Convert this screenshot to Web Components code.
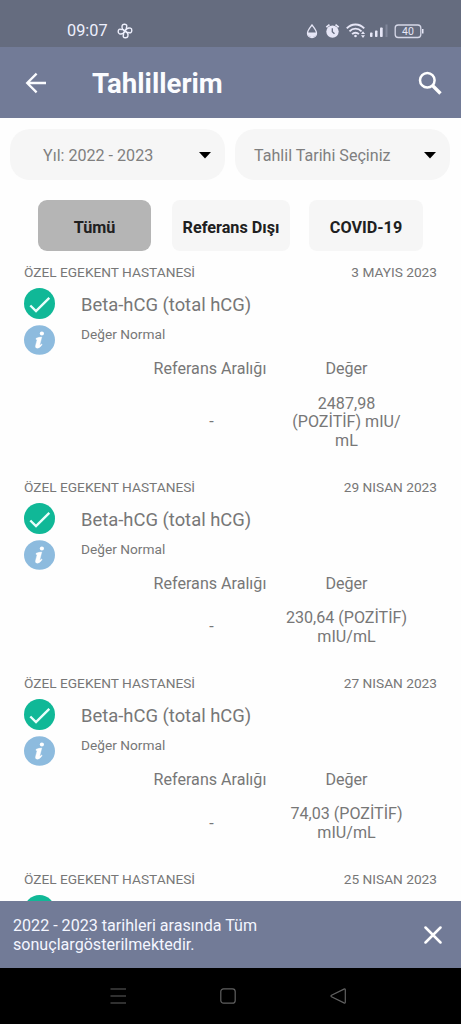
<!DOCTYPE html>
<html lang="tr">
<head>
<meta charset="utf-8">
<meta name="viewport" content="width=device-width">
<title>Tahlillerim</title>
<style>
html,body{margin:0;height:100%;overflow:hidden;background:#fefefe}
body{font-family:Roboto,"Noto Sans",sans-serif}
</style>
</head>
<body>
<lab-app></lab-app>
<script>
function define(name, css, html) {
  const t = document.createElement('template');
  t.innerHTML = `<style>*{box-sizing:border-box}${css}</style>${html}`;
  customElements.define(name, class extends HTMLElement {
    constructor() {
      super();
      this.attachShadow({mode: 'open'}).append(t.content.cloneNode(true));
    }
  });
}

define('status-bar', `
:host{display:flex;height:47px;flex:none;background:#656c7f;color:#eef0fd;padding:14px 37px 0 67px;align-items:center;justify-content:space-between}
.l{display:flex;align-items:center}
.t{font-size:16.300px;line-height:20px;padding-top:1px}
svg{display:block;flex:none}`, `
<div class="l"><span class="t">09:07</span>
<svg style="margin-left:9.500px" width="16" height="16" viewBox="0 0 16 16" fill="none" stroke="#eef0fd" stroke-width="1.400" stroke-linejoin="round">
<path d="M8 8C5.800 7 4.600 4.600 5.200 2.500C5.500 1.400 6.500 1.100 7.700 1.200C9.600 1.400 10.300 2.600 9.500 4.200C9.800 5.700 9.200 7 8 8Z"/>
<path d="M8 8C5.800 7 4.600 4.600 5.200 2.500C5.500 1.400 6.500 1.100 7.700 1.200C9.600 1.400 10.300 2.600 9.500 4.200C9.800 5.700 9.200 7 8 8Z" transform="rotate(90 8 8)"/>
<path d="M8 8C5.800 7 4.600 4.600 5.200 2.500C5.500 1.400 6.500 1.100 7.700 1.200C9.600 1.400 10.300 2.600 9.500 4.200C9.800 5.700 9.200 7 8 8Z" transform="rotate(180 8 8)"/>
<path d="M8 8C5.800 7 4.600 4.600 5.200 2.500C5.500 1.400 6.500 1.100 7.700 1.200C9.600 1.400 10.300 2.600 9.500 4.200C9.800 5.700 9.200 7 8 8Z" transform="rotate(270 8 8)"/></svg></div>
<svg width="120" height="18" viewBox="304 22 120 18" fill="#e6e6f6">
<path d="M312 25C310 27.800 307.500 30.300 307.500 33.200A4.500 4.300 0 0 0 316.500 33.200C316.500 30.300 314 27.800 312 25Z" fill="none" stroke="#e6e6f6" stroke-width="1.300"/>
<path d="M307.300 32.500H316.700A4.700 4.700 0 0 1 307.300 32.500Z"/>
<circle cx="332.500" cy="31.600" r="6.200"/>
<path d="M326.300 27.200L329.500 24.600M338.700 27.200L335.500 24.600" stroke="#e6e6f6" stroke-width="1.700" fill="none"/>
<path d="M332.300 28.300V31.700L334.500 33.800" fill="none" stroke="#656c7f" stroke-width="1.300"/>
<g fill="none" stroke="#e6e6f6" stroke-width="1.900"><path d="M346.800 28.400C351.500 23.100 359.500 23.100 364.200 28.400"/><path d="M349.500 31.400C352.900 27.700 358.100 27.700 361.500 31.400"/><path d="M352.100 34.100C354 32.200 357 32.200 358.900 34.100"/></g>
<circle cx="355.500" cy="36" r="1.300"/>
<path d="M361 34L363 31.300L365 34ZM361 35.200L363 37.900L365 35.200Z"/>
<rect x="370" y="32.500" width="2.500" height="4.500" rx=".8"/><rect x="375" y="30.500" width="2.500" height="6.500" rx=".8"/><rect x="380" y="27.500" width="2.700" height="9.500" rx=".8"/><rect x="385.500" y="24.500" width="2" height="12.500" fill="#80869a"/>
<rect x="395.200" y="25" width="25.600" height="12.500" rx="3" fill="none" stroke="#d6d8e8" stroke-width="1.300"/>
<path d="M422 29H423.500V33.500H422Z"/>
<text x="408" y="35" font-family="Roboto,sans-serif" font-size="10.500" text-anchor="middle">40</text></svg>`);

define('app-header', `
:host{display:flex;height:71px;flex:none;background:#727b97;color:#fbfcff;align-items:center;padding:0 19px 0 25px}
h1{margin:2px 0 0 45px;flex:1;font-size:27.600px;line-height:34px;font-weight:700}
svg{display:block}`, `
<svg width="22" height="22" viewBox="0 0 22 22" fill="none" stroke="#fbfcff" stroke-width="2.300"><path d="M21 11H2M11.600 1.600L2.200 11L11.600 20.400"/></svg>
<h1><slot></slot></h1>
<svg width="24" height="24" viewBox="0 0 24 24" fill="none" stroke="#fff"><circle cx="9.300" cy="9.300" r="7.300" stroke-width="2.500"/><path d="M14.500 14.500L22.500 22.500" stroke-width="3.300"/></svg>`);

define('select-pill', `
:host{display:flex;height:51px;border-radius:20px;background:#f6f6f6;color:#7f7f7f;align-items:center;justify-content:space-between;font-size:16.100px;line-height:20px}
span{padding-top:2px}
svg{display:block;margin-top:1px}`, `
<span><slot></slot></span><svg width="12" height="7" viewBox="0 0 12 7"><path d="M0 0H12L6 6.500Z" fill="#000"/></svg>`);

define('filter-tab', `
:host{display:flex;height:51px;border-radius:8px;background:#f6f6f6;color:#202020;align-items:center;justify-content:center;font-size:16.200px;font-weight:700;white-space:nowrap;padding-top:3px;box-sizing:border-box}
:host([active]){background:#b5b5b5;border-radius:9px}`, `<slot></slot>`);

define('lab-result', `
:host{display:block;color:#777;padding:0 24px 26.700px}
header{display:flex;justify-content:space-between;font-size:13.700px;line-height:20px;height:26px}
.m{display:grid;grid-template-columns:57px 1fr}
.i{display:grid;gap:6px;align-content:start}
svg{display:block}
.n{font-size:18.400px;line-height:22px;padding-top:6px}
.s{font-size:13.700px;line-height:18px;margin-top:9px}
.g{display:grid;grid-template-columns:136px 134px;margin:5px 0 0 118px;text-align:center;font-size:16.100px;line-height:18.500px;align-items:center;row-gap:16px}
.g>*{width:100%}
.v,.k{padding-left:3px}
:host([peek]) .g,:host([peek]) .n,:host([peek]) .s{display:none}`, `
<header><span>ÖZEL EGEKENT HASTANESİ</span><span><slot name="date"></slot></span></header>
<div class="m"><div class="i">
<svg width="31" height="31" viewBox="0 0 31 31"><circle cx="15.500" cy="15.500" r="15.500" fill="#10b897"/><path d="M6.300 17.500L12 23L25.300 9.800" fill="none" stroke="#e9fffb" stroke-width="2.400"/></svg>
<svg width="31" height="30" viewBox="0 0 31 30"><ellipse cx="15.500" cy="15" rx="15.500" ry="14.800" fill="#8dbbde"/><circle cx="17.900" cy="8.500" r="2.100" fill="#fff"/><path d="M12.100 13.300Q15 12.100 17.800 12L15.700 20.300Q16.700 19.900 17.500 19.100L18.200 19.600Q16 23.200 13.300 23.200Q10.900 22.900 11.600 20.400L13.200 14.400H12Z" fill="#fff" stroke="#fff" stroke-width=".4"/></svg>
</div><div><div class="n">Beta-hCG (total hCG)</div><div class="s">Değer Normal</div></div></div>
<div class="g"><span>Referans Aralığı</span><span class="k">Değer</span><span class="k">-</span><span class="v"><slot></slot></span></div>`);

define('notice-bar', `
:host{display:flex;flex:none;height:67px;background:#727b97;color:#f4f6ff;align-items:center;justify-content:space-between;padding:0 19px 0 13px;font-size:16.100px;line-height:18.700px}
span{padding-top:2.500px}
svg{display:block}`, `
<span><slot></slot></span><svg width="18" height="18" viewBox="0 0 18 18"><path d="M1.500 1.500L16.500 16.500M16.500 1.500L1.500 16.500" stroke="#fff" stroke-width="2.500" stroke-linecap="round"/></svg>`);

define('nav-bar', `
:host{display:flex;flex:none;height:56px;background:#000;align-items:center;padding-left:110px;gap:94px}
svg{display:block;fill:none;stroke:#606060;stroke-width:1.200}`, `
<svg width="16" height="16" viewBox="0 0 16 16"><path d="M.5 1H16M.5 8H16M.5 15H16"/></svg>
<svg width="16" height="16" viewBox="0 0 16 16"><rect x=".8" y=".8" width="14.400" height="14.400" rx="2.800"/></svg>
<svg width="16" height="16" viewBox="0 0 16 16"><path d="M14 1.100Q15.300.5 15.300 2V14Q15.300 15.500 14 14.900L1.500 8.700Q.5 8 1.500 7.300Z"/></svg>`);

define('lab-app', `
:host{display:flex;flex-direction:column;width:461px;height:1024px;overflow:hidden}
.pills{display:flex;gap:10px;padding:11px 10px 0;flex:none}
select-pill{width:215px}
.a{padding:0 14px 0 33px}.b{padding:0 14px 0 19px}
.tabs{display:flex;padding:20px 38px 0;flex:none}
.x{width:113px}.y{width:118px;margin-left:21px}.z{width:114px;margin-left:19px}
main{flex:1;min-height:0;overflow:hidden;padding-top:11px}`, `
<status-bar></status-bar>
<app-header>Tahlillerim</app-header>
<div class="pills"><select-pill class="a">Yıl: 2022 - 2023</select-pill><select-pill class="b">Tahlil Tarihi Seçiniz</select-pill></div>
<div class="tabs"><filter-tab class="x" active>Tümü</filter-tab><filter-tab class="y">Referans Dışı</filter-tab><filter-tab class="z">COVID-19</filter-tab></div>
<main>
<lab-result><span slot="date">3 MAYIS 2023</span>2487,98<br>(POZİTİF) mIU/<br>mL</lab-result>
<lab-result><span slot="date">29 NISAN 2023</span>230,64 (POZİTİF)<br>mIU/mL</lab-result>
<lab-result><span slot="date">27 NISAN 2023</span>74,03 (POZİTİF)<br>mIU/mL</lab-result>
<lab-result peek><span slot="date">25 NISAN 2023</span></lab-result>
</main>
<notice-bar>2022 - 2023 tarihleri arasında Tüm<br>sonuçlargösterilmektedir.</notice-bar>
<nav-bar></nav-bar>`);
</script>
</body>
</html>
